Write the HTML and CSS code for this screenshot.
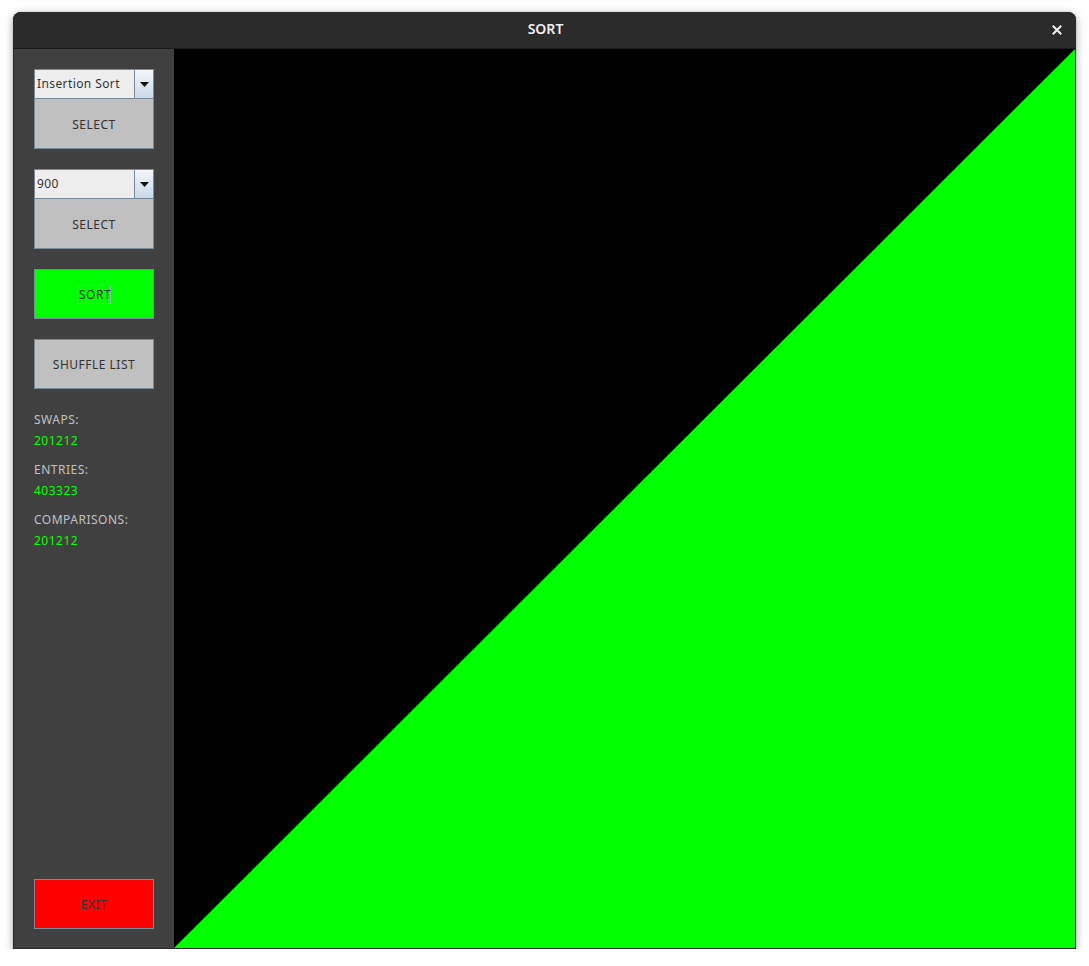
FILE: index.html
```html
<!DOCTYPE html>
<html>
<head>
<meta charset="utf-8">
<link rel="stylesheet" href="styles.css">
</head>
<body>
<div class="window">
  <div class="titlebar">
    <span class="title">SORT</span>
    <button class="close" aria-label="Close">
      <svg width="10" height="10" viewBox="0 0 10 10"><path d="M1.5 1.5 L8.5 8.5 M8.5 1.5 L1.5 8.5" stroke="#f2f2f2" stroke-width="2" stroke-linecap="square"/></svg>
    </button>
  </div>
  <div class="content">
    <div class="panel">
      <div class="group">
        <div class="combo">
          <span class="combo-text">Insertion Sort</span>
          <span class="combo-arrow"><svg width="9" height="5" viewBox="0 0 9 5"><path d="M0 0 H9 L4.5 5 Z" fill="#111"/></svg></span>
        </div>
        <button class="btn">SELECT</button>
      </div>
      <div class="group">
        <div class="combo">
          <span class="combo-text">900</span>
          <span class="combo-arrow"><svg width="9" height="5" viewBox="0 0 9 5"><path d="M0 0 H9 L4.5 5 Z" fill="#111"/></svg></span>
        </div>
        <button class="btn">SELECT</button>
      </div>
      <button class="btn btn-sort"><span class="focus">SORT</span></button>
      <button class="btn">SHUFFLE LIST</button>
      <div class="stats">
        <div class="stat"><div class="stat-label">SWAPS:</div><div class="stat-value">201212</div></div>
        <div class="stat"><div class="stat-label">ENTRIES:</div><div class="stat-value">403323</div></div>
        <div class="stat"><div class="stat-label">COMPARISONS:</div><div class="stat-value">201212</div></div>
      </div>
      <div class="spacer"></div>
      <button class="btn btn-exit">EXIT</button>
    </div>
    <div class="canvas">
      <svg class="plot" viewBox="0 0 900 900" preserveAspectRatio="none"><polygon points="0,900 900,0 900,900" fill="#00ff00"/></svg>
    </div>
  </div>
</div>
</body>
</html>
```

FILE: styles.css
```css
html, body {
  margin: 0;
  padding: 0;
  background: #ffffff;
}
body {
  font-family: "Noto Sans", "Liberation Sans", sans-serif;
}
.window {
  margin: 12px 0 0 13px;
  width: 1063px;
  height: 937px;
  box-sizing: border-box;
  display: flex;
  flex-direction: column;
  border-radius: 8px 8px 0 0;
  background: #2b2b2b;
  box-shadow: 0 2px 8px rgba(0, 0, 0, 0.35), 0 0 1px rgba(0, 0, 0, 0.4);
  overflow: hidden;
}
.titlebar {
  height: 36px;
  flex: none;
  position: relative;
  display: flex;
  align-items: center;
  justify-content: center;
  background: #2b2b2b;
  border-bottom: 1px solid #1c1c1c;
}
.title {
  color: #f0f0f0;
  font-size: 14px;
  font-weight: 600;
  margin-left: 2px;
  margin-top: -3px;
}
.close {
  position: absolute;
  right: 14px;
  top: 13px;
  width: 10px;
  height: 10px;
  padding: 0;
  border: 0;
  background: none;
  display: flex;
}
.content {
  flex: 1;
  display: flex;
  border: 1px solid #2a2a2a;
  border-top: 0;
  min-height: 0;
}
.panel {
  width: 160px;
  flex: none;
  background: #404040;
  box-sizing: border-box;
  padding: 20px 20px 19px 20px;
  display: flex;
  flex-direction: column;
  gap: 20px;
}
.group {
  display: flex;
  flex-direction: column;
}
.combo {
  height: 30px;
  box-sizing: border-box;
  border: 1px solid #7a8a99;
  display: flex;
  background: #eeeeee;
}
.combo-text {
  flex: 1;
  font-size: 12px;
  color: #333333;
  padding-left: 2px;
  line-height: 28px;
  letter-spacing: 0.4px;
}
.combo-arrow {
  width: 18px;
  border-left: 1px solid #7a8a99;
  background: linear-gradient(to bottom, #f3f6fa, #c9d9ea);
  display: flex;
  align-items: center;
  justify-content: center;
}
.combo-arrow svg {
  display: block;
  width: 9px;
  height: 5px;
  margin-top: 1px;
}
.btn {
  height: 50px;
  width: 120px;
  box-sizing: border-box;
  border: 1px solid #7a8a99;
  background: #c0c0c0;
  color: #333333;
  font-family: "Noto Sans", "Liberation Sans", sans-serif;
  font-size: 12px;
  letter-spacing: 0.5px;
  padding: 0;
  margin: 0;
  display: flex;
  align-items: center;
  justify-content: center;
}
.group .btn {
  border-top: 0;
  height: 50px;
  padding-top: 2px;
}
.btn-sort {
  background: #00ff00;
}
.focus {
  display: block;
  box-sizing: border-box;
  width: 34px;
  height: 19px;
  border: 1px solid #9fb0c2;
  line-height: 17px;
  text-align: center;
  padding-left: 1px;
  margin-top: 1px;
}
.btn-exit {
  background: #ff0000;
}
.stats {
  display: flex;
  flex-direction: column;
  gap: 8px;
}
.stat-label {
  color: #c0c0c0;
  font-size: 12px;
  letter-spacing: 0.5px;
  line-height: 21px;
}
.stat-value {
  color: #00ff00;
  font-size: 12px;
  letter-spacing: 0.5px;
  line-height: 21px;
}
.spacer {
  flex: 1;
}
.canvas {
  flex: 1;
  background: #000000;
  display: flex;
}
.plot {
  display: block;
  width: 100%;
  height: 100%;
}
```
